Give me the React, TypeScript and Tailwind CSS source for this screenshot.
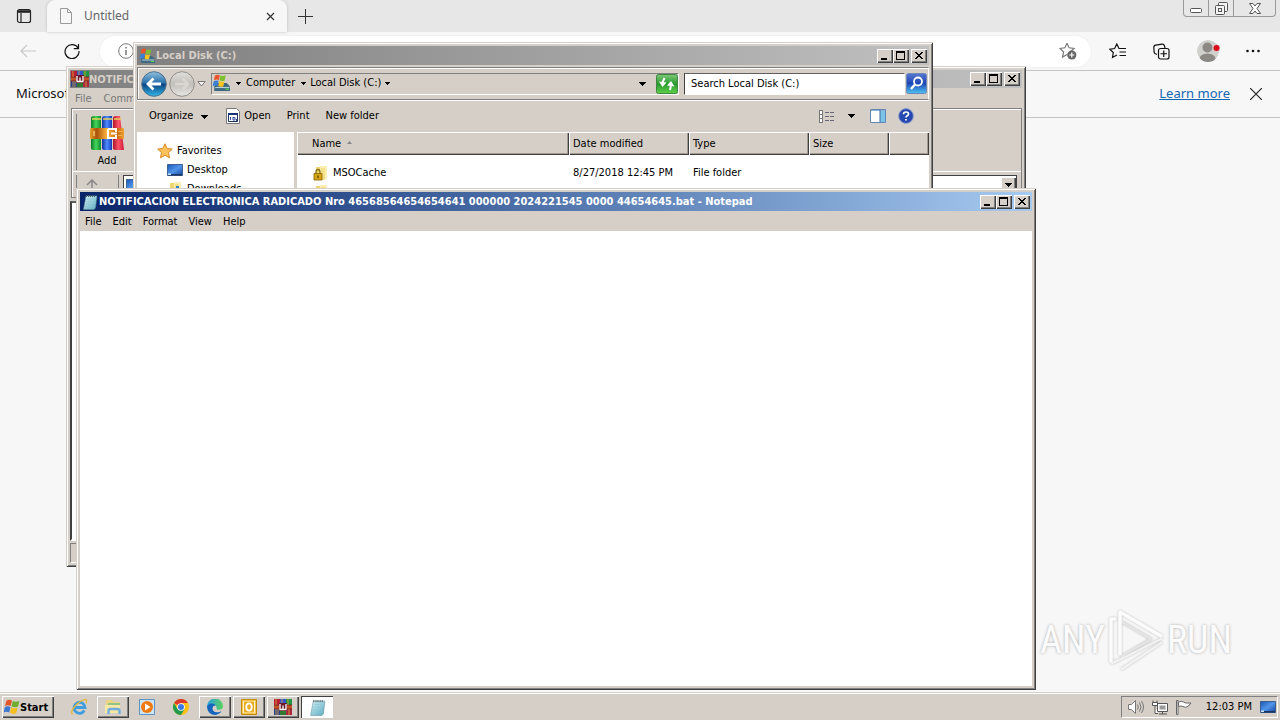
import type { ReactNode } from "react";

const RAISED =
  "bg-[#d6cfc7] shadow-[inset_1px_1px_0_#fff,inset_-1px_-1px_0_#404040,inset_-2px_-2px_0_#808080]";
const FRAME =
  "bg-[#d6cfc7] shadow-[inset_1px_1px_0_#d6cfc7,inset_-1px_-1px_0_#404040,inset_2px_2px_0_#fff,inset_-2px_-2px_0_#808080]";
const SUNKEN = "border border-t-[#808080] border-l-[#808080] border-r-white border-b-white";

function Caret({ className = "" }: { className?: string }) {
  return (
    <svg viewBox="0 0 7 4" className={`shrink-0 ${className}`} aria-hidden="true" shapeRendering="crispEdges">
      <path d="M0 0h7L3.5 4z" fill="#000" />
    </svg>
  );
}

function CaptionButtons() {
  return (
    <div className="ml-auto flex h-3.5 shrink-0">
      <button aria-label="Minimize" className={`h-3.5 w-4 ${RAISED}`}>
        <svg viewBox="0 0 16 14" className="h-3.5 w-4" shapeRendering="crispEdges">
          <path d="M4 9h6v2H4z" />
        </svg>
      </button>
      <button aria-label="Maximize" className={`h-3.5 w-4 ${RAISED}`}>
        <svg viewBox="0 0 16 14" className="h-3.5 w-4" shapeRendering="crispEdges">
          <path d="M3 2h9v9H3zM4 4v6h7V4z" fillRule="evenodd" />
        </svg>
      </button>
      <button aria-label="Close" className={`ml-0.5 h-3.5 w-4 ${RAISED}`}>
        <svg viewBox="0 0 16 14" className="h-3.5 w-4" shapeRendering="crispEdges">
          <path d="M4 3h2v1h1v1h2V4h1V3h2v1h-1v1h-1v1H9v1h1v1h1v1h1v1h-2V9H9V8H7v1H6v1H4V9h1V8h1V7h1V6H6V5H5V4H4z" />
        </svg>
      </button>
    </div>
  );
}

function DriveIcon({ className = "size-4" }: { className?: string }) {
  return (
    <svg viewBox="0 0 16 16" className={`shrink-0 ${className}`} aria-hidden="true">
      <path d="M2 11l2-3h9l3 3v4H2z" fill="#3f6a80" />
      <path d="M3 11.500h12.500v1H3z" fill="#b9d0dc" />
      <path d="M12 13h3v1h-3z" fill="#59e04a" />
      <path d="M2.500 1.500q2-1.500 4.500-.5L6 5.500Q4 4.300 1.700 5.800z" fill="#e8532a" />
      <path d="M7.600 1.200q2 1 4.700 0L11.200 6q-2.500.8-4.600-.4z" fill="#7fbf2f" />
      <path d="M1.500 6.400q2.300-1.200 4.400-.3l-1.100 4.400q-2-.9-4.300.5z" fill="#3b7fd6" />
      <path d="M6.500 6.300q2.200 1 4.500.3l-1 4.400q-2.300.8-4.500-.4z" fill="#f8c520" />
    </svg>
  );
}

function RarIcon({ className = "size-4" }: { className?: string }) {
  return (
    <svg viewBox="0 0 18 16" className={`shrink-0 ${className}`} aria-hidden="true">
      <path d="M0 0h6v7H0z" fill="#b4202f" />
      <path d="M6 0h6v7H6z" fill="#3556c8" />
      <path d="M12 0h6v7h-6z" fill="#1f9644" />
      <path d="M0 9h6v7H0z" fill="#26428f" />
      <path d="M6 9h6v7H6z" fill="#307a33" />
      <path d="M12 9h6v7h-6z" fill="#a5283b" />
      <path d="M0 6h18v4H0z" fill="#c0532a" />
      <path d="M0 6h18M0 10h18" stroke="#6d1a1f" strokeWidth=".8" />
      <path d="M5 4h8v8H5z" fill="#6b1a2c" />
      <path d="M6 5v5.500h6V5M9 6.500v4" fill="none" stroke="#fff" strokeWidth="1.300" />
      <path d="M2 0v6M4 10v6M8 0v4M14 0v6M15 10v6M2 10v6" stroke="#e6a33c" strokeWidth=".8" />
    </svg>
  );
}

function BigRarIcon() {
  return (
    <svg viewBox="0 0 36 36" className="size-9" aria-hidden="true">
      <defs>
        <linearGradient id="bookG"><stop offset="0" stopColor="#0d7a28" /><stop offset=".5" stopColor="#45d659" /><stop offset="1" stopColor="#0e8a2e" /></linearGradient>
        <linearGradient id="bookB"><stop offset="0" stopColor="#12339d" /><stop offset=".5" stopColor="#4f8cff" /><stop offset="1" stopColor="#153ab5" /></linearGradient>
        <linearGradient id="bookR"><stop offset="0" stopColor="#b0122e" /><stop offset=".5" stopColor="#ff5566" /><stop offset="1" stopColor="#cc1838" /></linearGradient>
        <linearGradient id="belt"><stop offset="0" stopColor="#e8a02a" /><stop offset=".2" stopColor="#a85208" /><stop offset=".5" stopColor="#ffb53e" /><stop offset=".8" stopColor="#c9680c" /><stop offset="1" stopColor="#f0a030" /></linearGradient>
      </defs>
      <path d="M2 3q0-2 3-2h7v34H5q-3 0-3-2z" fill="url(#bookG)" />
      <path d="M13 3q0-2 3-2h7v34h-7q-3 0-3-2z" fill="url(#bookB)" />
      <path d="M24 3q0-2 3-2h4l4 34h-8q-3 0-3-2z" fill="url(#bookR)" />
      <path d="M3 4h9M14 4h9M25 4h7" stroke="#e9d25a" strokeWidth="1.500" />
      <rect x="1" y="13" width="34" height="11" rx="1.500" fill="url(#belt)" />
      <path d="M19 14h8v3M19 14v9h8v-3M22 18.500h6" fill="none" stroke="#fff" strokeWidth="2" />
      <path d="M5 16v5M30 16v1M32 16v1M30 20v1M32 20v1" stroke="#ffd98a" strokeWidth="1.200" />
    </svg>
  );
}

function NotepadIcon({ className = "size-4" }: { className?: string }) {
  return (
    <svg viewBox="0 0 16 16" className={`shrink-0 ${className}`} aria-hidden="true">
      <defs>
        <linearGradient id="pad" x2="1" y2="1"><stop offset="0" stopColor="#d9f3f7" /><stop offset="1" stopColor="#58a9bf" /></linearGradient>
      </defs>
      <path d="M4 2h11l-1.500 12L12 15.500H1.500z" fill="url(#pad)" stroke="#5e8b9b" strokeWidth=".5" />
      <path d="M4.500 5h8M4 7.500h8.500M3.700 10h8.500M3.400 12.500h8.500" stroke="#8cc6d6" strokeWidth=".7" />
      <path d="M4.500 1v2M6.500 1v2M8.500 1v2M10.500 1v2M12.500 1v2" stroke="#4d5b60" strokeWidth=".9" />
    </svg>
  );
}

function FolderIcon({ badge }: { badge?: "lock" | "arrow" }) {
  return (
    <svg viewBox="0 0 16 16" className="size-4 shrink-0" aria-hidden="true">
      <path d="M3 2h5v13H3z" fill="#f0d573" />
      <path d="M7 1h7v13H7z" fill="#faefb4" />
      <path d="M8 3h4v12H8z" fill="#f5e08a" />
      {badge === "lock" && (
        <>
          <path d="M3 9V7q0-2.500 2-2.500T7 7v2" fill="none" stroke="#8a7013" strokeWidth="1.300" />
          <path d="M1 8.500h8V15H1z" fill="#d9a514" stroke="#7e6105" strokeWidth=".8" />
          <path d="M5 10.500v2.500" stroke="#4a3600" strokeWidth="1.200" />
        </>
      )}
      {badge === "arrow" && <path d="M9 5h3v5h2l-3.500 4L7 10h2z" fill="#2b82c9" />}
    </svg>
  );
}

function MonitorIcon({ className = "size-4" }: { className?: string }) {
  return (
    <svg viewBox="0 0 16 16" className={`shrink-0 ${className}`} aria-hidden="true">
      <defs>
        <linearGradient id="screen" x2="1" y2="1"><stop offset="0" stopColor="#1b56b8" /><stop offset=".5" stopColor="#4f95e8" /><stop offset="1" stopColor="#1746a0" /></linearGradient>
      </defs>
      <path d="M.5 2.500h15v11H.5z" fill="url(#screen)" stroke="#2a4a80" strokeWidth=".8" />
      <path d="M1 12h14v1.500H1z" fill="#1b3565" />
      <path d="M1 11.500h3v1.500H1z" fill="#c6e2f6" />
    </svg>
  );
}

/* ---------- Browser ---------- */

function Browser() {
  return (
    <section aria-label="Browser" className="flex flex-1 flex-col bg-[#f7f7f7] font-['Noto_Sans',sans-serif] text-[#111]">
      <div className="flex h-8 items-stretch bg-[#e7e7e7]">
        <button aria-label="Tab actions" className="grid w-[47px] place-items-center">
          <svg viewBox="0 0 16 16" className="size-4" fill="none" stroke="#222" strokeWidth="1.200">
            <rect x="1.500" y="1.500" width="13" height="13" rx="2" />
            <path d="M1.500 3.500h13" strokeWidth="2.600" />
            <path d="M5 5v9" />
          </svg>
        </button>
        <div className="flex w-60 items-center rounded-t-lg bg-[#f7f7f7] px-3 shadow-[0_0_3px_#bbb]">
          <svg viewBox="0 0 14 16" className="h-4 w-3.5" fill="none" stroke="#999" aria-hidden="true">
            <path d="M1.500.5h7l4 4v11h-11zM8.500.5v4h4" />
          </svg>
          <span className="ml-[11px] text-xs text-[#666]">Untitled</span>
          <button aria-label="Close tab" className="ml-auto">
            <svg viewBox="0 0 9 9" className="size-[9px]" stroke="#333" strokeWidth="1.200"><path d="M1 1l7 7M8 1L1 8" /></svg>
          </button>
        </div>
        <button aria-label="New tab" className="grid w-9 place-items-center">
          <svg viewBox="0 0 15 15" className="size-[15px]" stroke="#333" shapeRendering="crispEdges"><path d="M7.500 0v15M0 7.500h15" /></svg>
        </button>
        <div className="mr-1 ml-auto flex h-[17px] rounded-b border border-t-0 border-[#999]">
          <button aria-label="Minimize browser" className="grid w-[25px] place-items-center border-r border-[#999]">
            <svg viewBox="0 0 12 12" className="size-3" fill="#fff" stroke="#555"><rect x=".5" y="6.500" width="11" height="4" rx="1" /></svg>
          </button>
          <button aria-label="Restore browser" className="grid w-[25px] place-items-center border-r border-[#999]">
            <svg viewBox="0 0 13 13" className="size-[13px]" fill="#f4f4f4" stroke="#555">
              <rect x="3.500" y=".5" width="9" height="9" rx="1" /><rect x=".5" y="3.500" width="9" height="9" rx="1" /><rect x="3.500" y="6.500" width="3" height="3" />
            </svg>
          </button>
          <button aria-label="Close browser" className="grid w-[41px] place-items-center">
            <svg viewBox="0 0 12 11" className="h-[11px] w-3" fill="#fff" stroke="#555">
              <path d="M.5.5h3.500l2 2.500L8 .5h3.500L8 5.500l3.500 5H8L6 8l-2 2.500H.5l3.500-5z" />
            </svg>
          </button>
        </div>
      </div>

      <div className="flex h-[39px] items-center border-b border-[#c4c4c4] px-5">
        <button aria-label="Back">
          <svg viewBox="0 0 16 14" className="h-3.5 w-4" fill="none" stroke="#c8c8c8" strokeWidth="1.200"><path d="M16 7H1M7 1L1 7l6 6" /></svg>
        </button>
        <button aria-label="Refresh" className="ml-7">
          <svg viewBox="0 0 16 16" className="size-4" fill="none" stroke="#111" strokeWidth="1.200"><path d="M14.300 5.500A7 7 0 1 0 15 8M14.500 1v4.700H9.800" /></svg>
        </button>
        <div className="ml-5 flex h-[31px] flex-1 items-center rounded-full bg-white px-[18px] shadow-[0_0_2px_#e5e5e5]">
          <svg viewBox="0 0 16 16" className="size-4" fill="none" stroke="#777" aria-hidden="true"><circle cx="8" cy="8" r="7.300" /><path d="M8 7v5M8 4v1.500" strokeWidth="1.500" /></svg>
          <input aria-label="Address" className="min-w-0 flex-1 bg-transparent text-xs outline-none" />
          <button aria-label="Add to favorites" className="-mr-1">
            <svg viewBox="0 0 18 18" className="size-[18px]" fill="none" stroke="#777" strokeWidth="1.200">
              <path d="M8 1.200l2.100 4.600 5 .6-3.700 3.400M8 1.200L5.900 5.800l-5 .6L4.600 10l-1 5 4.400-2.500" />
              <circle cx="12.800" cy="13" r="4.600" fill="#666" stroke="none" />
              <path d="M12.800 10.500v5M10.300 13h5" stroke="#fff" />
            </svg>
          </button>
        </div>
        <div className="ml-[18px] flex items-center">
          <button aria-label="Favorites">
            <svg viewBox="0 0 17 16" className="h-4 w-[17px]" fill="none" stroke="#111" strokeWidth="1.200"><path d="M10.500 5.500H10L7.800 1 5.600 5.500l-4.800.7L4.300 9.500l-.8 5L8 12M10 5.500h7M10.500 9H17M10.500 12.500H17" /></svg>
          </button>
          <button aria-label="Collections" className="ml-[27px]">
            <svg viewBox="0 0 17 17" className="size-[17px]" fill="none" stroke="#111" strokeWidth="1.200">
              <path d="M3.800 11.500L2 10.500Q1.200 10 1.100 9L.8 4.500Q.7 2.500 2.700 2.200L9 1.200q2-.2 2.500 1.800L12 5" />
              <rect x="5.500" y="5.500" width="10.500" height="10.500" rx="2" fill="#f7f7f7" /><path d="M10.750 7.500v6.500M7.500 10.750H14" />
            </svg>
          </button>
          <button aria-label="Profile" className="ml-[26px]">
            <svg viewBox="0 0 24 24" className="size-6">
              <defs><clipPath id="avatar"><circle cx="12" cy="12" r="11" /></clipPath></defs>
              <g clipPath="url(#avatar)"><circle cx="12" cy="12" r="11" fill="#d0d0cd" /><circle cx="11.500" cy="8.500" r="5" fill="#8c8884" /><ellipse cx="11.500" cy="20" rx="8" ry="5.500" fill="#8c8884" /></g>
              <circle cx="20.500" cy="9" r="3.600" fill="#d80e1c" stroke="#dfece4" strokeWidth=".8" />
            </svg>
          </button>
          <button aria-label="Settings and more" className="ml-[26px]">
            <svg viewBox="0 0 14 4" className="h-1 w-3.5" fill="#111"><circle cx="1.500" cy="2" r="1.300" /><circle cx="7" cy="2" r="1.300" /><circle cx="12.500" cy="2" r="1.300" /></svg>
          </button>
        </div>
      </div>

      <div className="flex h-[47px] items-center border-b border-[#c4c4c4] pr-[18px] pl-4 text-[13px]">
        <p className="w-[50px] overflow-hidden">Microsoft</p>
        <a href="#learn" className="ml-auto text-[#1466b0] underline">Learn more</a>
        <button aria-label="Dismiss" className="ml-5">
          <svg viewBox="0 0 12 12" className="size-3" stroke="#222" strokeWidth="1.200"><path d="M0 0l12 12M12 0L0 12" /></svg>
        </button>
      </div>
    </section>
  );
}

/* ---------- Archive manager ---------- */

function ArchiveWindow() {
  return (
    <section aria-label="Archive manager" className={`absolute top-[66px] left-[66px] flex h-[501px] w-[960px] flex-col p-1 ${FRAME}`}>
      <header className="flex h-[18px] shrink-0 items-center bg-linear-to-r from-[#808080] to-[#c0c0c0] pr-0.5 pl-px">
        <RarIcon className="h-4 w-[18px]" />
        <span className="overflow-hidden pt-0.5 text-[11px] font-bold whitespace-nowrap text-[#d6cfc7]">NOTIFICACION ELECTRONICA</span>
        <CaptionButtons />
      </header>
      <nav className="flex h-5 shrink-0 items-center gap-3 pt-0.5 pl-[5px] text-[#777]">
        <button>File</button>
        <button>Commands</button>
      </nav>
      <div className="ml-px border border-[#808080] shadow-[inset_1px_1px_0_#fff]">
        <div className="flex h-[62px] items-center pt-1 pl-1">
          <i className="h-14 w-px bg-[#808080]" />
          <button className="ml-3 flex w-9 flex-col items-center">
            <BigRarIcon />
            <span className="pt-0.5 leading-4">Add</span>
          </button>
        </div>
        <div className="flex h-[26px] items-center border-t border-white px-1">
          <i className="h-5 w-px bg-[#808080]" />
          <button aria-label="Up one level" className="ml-[9px]">
            <svg viewBox="0 0 12 12" className="size-3" fill="none" stroke="#888" strokeWidth="1.500"><path d="M6 12V1.500M1 6l5-5 5 5" /></svg>
          </button>
          <i className="ml-5 h-5 w-px bg-[#808080]" />
          <div className="ml-1 flex h-5 flex-1 items-center justify-between border border-[#404040] bg-white pl-0.5">
            <MonitorIcon />
            <button aria-label="Open path list" className={`grid h-4 w-[15px] place-items-center ${RAISED}`}><Caret className="h-1 w-[7px]" /></button>
          </div>
        </div>
      </div>
      <div className="mt-[3px] flex-1 border-2 border-t-[#606060] border-r-white border-b-white border-l-[#404040] bg-white" />
      <footer className="flex h-[22px] shrink-0 items-center pt-0.5">
        <div className={`h-5 flex-1 ${SUNKEN}`} />
      </footer>
    </section>
  );
}

/* ---------- File explorer ---------- */

function NavItem({ icon, label, root }: { icon: ReactNode; label: string; root?: boolean }) {
  return (
    <li className={root ? "flex h-[19px] items-center gap-1 pl-5" : "flex h-[19px] items-center gap-1 pl-[30px]"}>
      {icon}
      <a href="#nav" className="pt-0.5">{label}</a>
    </li>
  );
}

const COLUMN =
  "h-[23px] px-1 pt-0.5 text-left font-normal shadow-[inset_1px_1px_0_#fff,inset_-1px_-1px_0_#404040,inset_-2px_-2px_0_#a09a93]";

function ExplorerWindow() {
  return (
    <section aria-label="Local Disk (C:)" className={`absolute top-[42px] left-[133px] flex h-[500px] w-[800px] flex-col p-1 ${FRAME}`}>
      <header className="flex h-[19px] shrink-0 items-center bg-linear-to-r from-[#808080] to-[#c0c0c0] px-0.5">
        <DriveIcon />
        <span className="ml-px pt-px text-[11px] font-bold text-[#d6cfc7]">Local Disk (C:)</span>
        <CaptionButtons />
      </header>

      <div className="mt-0.5 flex h-[33px] shrink-0 items-center border border-white border-t-[#808080] border-b-[#808080] border-l-[#808080] pr-px pl-[3px] shadow-[0_1px_0_#fff,inset_1px_1px_0_#fff]">
        <button aria-label="Back">
          <svg viewBox="0 0 26 26" className="size-[26px]">
            <defs><linearGradient id="orb" y2="1" x2="0"><stop offset="0" stopColor="#8fc0de" /><stop offset=".45" stopColor="#2a72ae" /><stop offset=".52" stopColor="#0d4583" /><stop offset="1" stopColor="#2fb8e8" /></linearGradient></defs>
            <circle cx="13" cy="13" r="12.300" fill="url(#orb)" stroke="#53718a" />
            <path d="M20 13H7.500M12.500 7.500L7 13l5.500 5.500" fill="none" stroke="#fff" strokeWidth="2.800" />
          </svg>
        </button>
        <button aria-label="Forward" className="ml-0.5">
          <svg viewBox="0 0 26 26" className="size-[26px]">
            <defs><linearGradient id="orbOff" y2="1" x2="0"><stop offset="0" stopColor="#e2e0dc" /><stop offset=".5" stopColor="#c2bfba" /><stop offset="1" stopColor="#e9e7e4" /></linearGradient></defs>
            <circle cx="13" cy="13" r="12.300" fill="url(#orbOff)" stroke="#8f8d8a" />
            <path d="M6 13h12.500M13.500 7.500L19 13l-5.500 5.500" fill="none" stroke="#dad7d3" strokeWidth="2.500" />
          </svg>
        </button>
        <button aria-label="Recent pages" className="ml-0.5">
          <svg viewBox="0 0 9 6" className="h-1.5 w-[9px]" fill="#f4f2ef" stroke="#777"><path d="M.8.5h7.400L4.500 5z" /></svg>
        </button>
        <div className={`ml-[5px] flex h-[22px] flex-1 items-center ${SUNKEN}`}>
          <DriveIcon className="mb-0.5 size-[18px]" />
          <Caret className="ml-1.5 h-[3px] w-[5px]" />
          <button className="ml-[5px]">Computer</button>
          <Caret className="ml-1.5 h-[3px] w-[5px]" />
          <button className="ml-1">Local Disk (C:)</button>
          <Caret className="ml-1 h-[3px] w-[5px]" />
          <Caret className="ml-auto h-1 w-[7px]" />
          <button aria-label="Refresh folder" className="ml-2.5">
            <svg viewBox="0 0 22 20" className="h-5 w-[22px]">
              <defs><linearGradient id="go" y2="1" x2="0"><stop offset="0" stopColor="#7cc877" /><stop offset=".5" stopColor="#2b9a2f" /><stop offset="1" stopColor="#5ed14a" /></linearGradient></defs>
              <rect x=".5" y=".5" width="21" height="19" rx="2" fill="url(#go)" stroke="#3d8540" />
              <path d="M8.500 4L6.500 8.500M15 11l-1 5" fill="none" stroke="#fff" strokeWidth="2" />
              <path d="M3 7.500l7.500 1L6.500 13zM11 11.500L15 7l3.500 5.500z" fill="#fff" />
            </svg>
          </button>
        </div>
        <input
          aria-label="Search Local Disk (C:)"
          defaultValue="Search Local Disk (C:)"
          className="ml-[5px] h-[22px] w-[221px] rounded-none border border-t-[#606060] border-r-white border-b-white border-l-[#404040] bg-white px-1.5 outline-none"
        />
        <button aria-label="Search" className="ml-px">
          <svg viewBox="0 0 21 21" className="size-[21px]">
            <defs><linearGradient id="find" y2="1" x2="0"><stop offset="0" stopColor="#5779cf" /><stop offset=".5" stopColor="#1d46b6" /><stop offset="1" stopColor="#4fc6f5" /></linearGradient></defs>
            <rect x=".5" y=".5" width="20" height="20" rx="2" fill="url(#find)" stroke="#6b86b8" />
            <circle cx="12" cy="8.500" r="4" fill="none" stroke="#fff" strokeWidth="1.800" />
            <path d="M9 11.500L5 16" stroke="#fff" strokeWidth="2.400" />
          </svg>
        </button>
      </div>

      <div className="flex h-8 shrink-0 items-center pr-[15px] pl-3">
        <button className="flex items-center gap-2 pt-px">Organize <Caret className="h-1 w-[7px]" /></button>
        <button className="ml-[18px] flex items-center gap-1">
          <svg viewBox="0 0 14 16" className="h-4 w-3.5" fill="none" aria-hidden="true">
            <path d="M.5.500h10l3 3v12H.5z" fill="#fff" stroke="#777" />
            <path d="M2.500 5.500h9v8h-9z" fill="#fff" stroke="#1b2f60" />
            <path d="M2 6h10" stroke="#1b2f80" strokeWidth="2" />
            <path d="M4.500 9v3M7 9v3h2V9.500H7M10.500 11v2" stroke="#334a9d" />
          </svg>
          <span className="pt-px">Open</span>
        </button>
        <button className="ml-4 pt-px">Print</button>
        <button className="ml-4 pt-px">New folder</button>
        <button aria-label="Change view" className="ml-auto">
          <svg viewBox="0 0 16 13" className="h-[13px] w-4" fill="none" stroke="#777" shapeRendering="crispEdges">
            <path d="M.5.500h3v4h-3zM.5 4.500h3v4h-3zM.5 8.500h3v4h-3z" fill="#fff" />
            <path d="M5.500 2.500h4M11 2.500h4M5.500 6.500h4M11 6.500h4M5.500 10.500h4M11 10.500h4" stroke="#667" />
          </svg>
        </button>
        <Caret className="ml-[13px] h-1 w-[7px]" />
        <button aria-label="Preview pane" className="ml-[15px]">
          <svg viewBox="0 0 16 14" className="h-3.5 w-4"><path d="M.5.500h15v13H.5z" fill="#fff" stroke="#5f86b4" /><path d="M10 2h5v11h-5z" fill="#79c3e6" /><path d="M1 1.500h14" stroke="#8eb4dc" /><path d="M10 1v12" stroke="#3f6aa0" /></svg>
        </button>
        <button aria-label="Help" className="ml-3">
          <svg viewBox="0 0 16 16" className="size-4"><circle cx="8" cy="8" r="7.400" fill="#2748b0" stroke="#8ea0cf" /><path d="M5.500 6.300Q5.500 4 8 4t2.500 2Q10.500 7.200 9 8q-1 .6-1 1.500M8 11v1.500" fill="none" stroke="#fff" strokeWidth="1.700" /></svg>
        </button>
      </div>

      <div className="flex min-h-0 flex-1">
        <ul className="w-[157px] shrink-0 bg-white pt-[9px]">
          <NavItem
            root
            label="Favorites"
            icon={<svg viewBox="0 0 16 16" className="size-4" aria-hidden="true"><path d="M8 .8l2.200 4.700 5.100.6-3.800 3.500 1 5.200L8 12.300l-4.500 2.500 1-5.200L.7 6.100l5.100-.6z" fill="#fbc15b" stroke="#d98a22" /></svg>}
          />
          <NavItem label="Desktop" icon={<MonitorIcon />} />
          <NavItem label="Downloads" icon={<FolderIcon badge="arrow" />} />
        </ul>
        <div className="ml-[3px] flex-1 bg-white">
          <table className="w-full table-fixed border-collapse">
            <thead className="bg-[#d6cfc7]">
              <tr>
                <th scope="col" className={`w-[272px] ${COLUMN}`}>
                  <span className="flex items-center gap-1.5 pl-[11px]">
                    Name
                    <svg viewBox="0 0 5 3" className="mb-1 h-[3px] w-[5px]" aria-hidden="true"><path d="M0 3h5L2.500 0z" fill="#888" /></svg>
                  </span>
                </th>
                <th scope="col" className={`w-[120px] ${COLUMN}`}>Date modified</th>
                <th scope="col" className={`w-[120px] ${COLUMN}`}>Type</th>
                <th scope="col" className={`w-20 ${COLUMN}`}>Size</th>
                <td className={COLUMN} />
              </tr>
            </thead>
            <tbody>
              <tr className="h-2"><td colSpan={5} /></tr>
              <tr className="h-5">
                <td className="pl-4"><span className="flex items-center gap-1"><FolderIcon badge="lock" />MSOCache</span></td>
                <td className="px-1 whitespace-nowrap">8/27/2018 12:45 PM</td>
                <td className="px-1">File folder</td>
                <td />
                <td />
              </tr>
              <tr className="h-[18px]">
                <td className="pl-4"><FolderIcon /></td>
                <td colSpan={4} />
              </tr>
            </tbody>
          </table>
        </div>
      </div>
    </section>
  );
}

/* ---------- Notepad ---------- */

function NotepadWindow() {
  return (
    <section aria-label="Notepad" className={`absolute top-[188px] left-[76px] flex h-[502px] w-[960px] flex-col p-1 ${FRAME}`}>
      <header className="flex h-[19px] shrink-0 items-center bg-linear-to-r from-[#0a246a] to-[#a6caf0] px-0.5">
        <NotepadIcon />
        <span className="ml-px pt-0.5 text-[11px] font-bold whitespace-nowrap text-white">
          NOTIFICACION ELECTRONICA RADICADO Nro 46568564654654641 000000 2024221545 0000 44654645.bat - Notepad
        </span>
        <CaptionButtons />
      </header>
      <nav className="flex h-5 shrink-0 items-center gap-[11px] pt-0.5 pl-[5px]">
        <button>File</button>
        <button>Edit</button>
        <button>Format</button>
        <button>View</button>
        <button>Help</button>
      </nav>
      <textarea aria-label="Document text" className="block flex-1 resize-none bg-white p-1 font-['Liberation_Mono',monospace] outline-none" />
    </section>
  );
}

/* ---------- Taskbar ---------- */

function TaskButton({ label, look, children }: { label: string; look: "flat" | "open" | "active"; children: ReactNode }) {
  const styles = {
    flat: "grid h-[22px] w-8 place-items-center",
    open: `grid h-[22px] w-8 place-items-center ${RAISED}`,
    active: "grid h-[22px] w-8 place-items-center bg-white shadow-[inset_1px_1px_0_#404040,inset_-1px_-1px_0_#fff]",
  };
  return <button aria-label={label} className={styles[look]}>{children}</button>;
}

function Taskbar() {
  return (
    <footer className="relative flex h-7 shrink-0 items-center border-t border-[#d6cfc7] bg-[#d6cfc7] px-0.5 pt-px shadow-[inset_0_1px_0_#fff]">
      <button className={`flex h-[22px] w-[52px] items-center pl-0.5 text-[11px] font-bold ${RAISED}`}>
        <svg viewBox="0 0 16 16" className="size-4" aria-hidden="true">
          <path d="M2.500 1.500q3-1.500 5.500 0L6.700 7Q4 5.500 1 7z" fill="#e2562b" />
          <path d="M8.800 2q3 1.500 6.700-.3L14 7.500q-3.500 1.500-6.500-.3z" fill="#6fae2e" />
          <path d="M.9 8q3-1.300 5.600 0L5.200 13.500Q2.500 12 -.4 13.500z" fill="#3d78cf" />
          <path d="M7.300 8.300q3 1.500 6.400.3l-1.500 5.600q-3.400 1.300-6.300-.4z" fill="#f7bf1e" />
        </svg>
        <span className="pt-0.5">Start</span>
      </button>
      <nav className="ml-[9px] flex gap-0.5">
        <TaskButton label="Internet Explorer" look="flat">
          <svg viewBox="0 0 18 18" className="size-[18px]" fill="none">
            <path d="M14.300 12.500A5.500 5.500 0 1 1 15 9.500H5" stroke="#3f9ee0" strokeWidth="2.800" />
            <path d="M2.500 16.500C-1 13 8 3.500 14.500 1.700q3.500-.5 1.500 3.500" stroke="#e2b63c" strokeWidth="1.300" />
          </svg>
        </TaskButton>
        <TaskButton label="File Explorer" look="open">
          <svg viewBox="0 0 18 16" className="h-4 w-[18px]">
            <path d="M2 1h6l1.500 2H16v11H2z" fill="#edd683" /><path d="M4 4h12v3H4z" fill="#8fc486" /><path d="M1 6h15v8H1z" fill="#f8e8a5" />
            <path d="M4.500 15v-3q0-2 2-2h7q2 0 2 2v3" fill="none" stroke="#6eaddc" strokeWidth="2.400" />
          </svg>
        </TaskButton>
        <TaskButton label="Media Player" look="flat">
          <svg viewBox="0 0 16 16" className="size-4"><path d="M.5.500h15v15H.5z" fill="#cfe5f6" stroke="#5c93c6" /><circle cx="8" cy="8" r="6" fill="#ef7a12" /><path d="M6 4.500v7L11.500 8z" fill="#fff" /></svg>
        </TaskButton>
        <TaskButton label="Chrome" look="flat">
          <svg viewBox="0 0 16 16" className="size-4">
            <circle cx="8" cy="8" r="8" fill="#fbc116" />
            <path d="M8 8L1.070 4A8 8 0 0 1 14.930 4H8z" fill="#db3a2d" />
            <path d="M1.070 4A8 8 0 0 0 8 16l3.500-6H8L4.500 10z" fill="#249a4c" />
            <circle cx="8" cy="8" r="3.800" fill="#fff" /><circle cx="8" cy="8" r="3" fill="#3c79e6" />
          </svg>
        </TaskButton>
        <TaskButton label="Edge" look="open">
          <svg viewBox="0 0 16 16" className="size-4">
            <defs>
              <linearGradient id="edgeTop" x2="1"><stop offset="0" stopColor="#2a9fe3" /><stop offset="1" stopColor="#5bd15b" /></linearGradient>
            </defs>
            <path d="M0 8A8 8 0 0 1 16 7q0 3.800-4 3.800-3 0-2.500-1.300Q10 8 8.500 6.500T0 8z" fill="url(#edgeTop)" />
            <path d="M0 8q1-3.500 4.800-3.500 3 0 4 2-3-.5-3.300 2.500-.2 4 4.500 4.300 2.500.2 4.500-1.200A8 8 0 0 1 8 16 8 8 0 0 1 0 8z" fill="#1565bd" />
          </svg>
        </TaskButton>
        <TaskButton label="Outlook" look="open">
          <svg viewBox="0 0 18 18" className="size-[18px]">
            <path d="M1.500 1.500h15v15h-15z" fill="#f7c64a" stroke="#c28a09" />
            <path d="M3 3h12v12H3z" fill="#fff3cc" />
            <path d="M4 3.500h10v11H4z" fill="#e9ab22" />
            <ellipse cx="9" cy="9" rx="2.700" ry="3.600" fill="none" stroke="#fff" strokeWidth="1.800" />
          </svg>
        </TaskButton>
        <TaskButton label="WinRAR" look="open"><RarIcon className="h-4 w-[18px]" /></TaskButton>
        <TaskButton label="Notepad" look="active"><NotepadIcon className="size-[17px]" /></TaskButton>
      </nav>
      <div className={`ml-auto flex h-[22px] items-center pr-px pl-1.5 ${SUNKEN}`}>
        <svg viewBox="0 0 16 14" className="h-3.5 w-4" fill="#fff" stroke="#777" aria-hidden="true">
          <path d="M.5 4.500h3l4-4v13l-4-4h-3z" /><path d="M9.500 4.500q1.500 2.500 0 5M11.500 2.500q3 4.500 0 9M13.500 1q4 6 0 12" fill="none" />
        </svg>
        <svg viewBox="0 0 16 15" className="ml-2 h-[15px] w-4" fill="#fff" stroke="#555" aria-hidden="true">
          <path d="M5.500 3.500h10v8h-10z" /><path d="M7.500 5.500h6v4h-6z" fill="#999" stroke="none" /><path d="M7 14h8M10.500 12v2" /><path d="M1 .5v2M5 .5v2M.5 2.500h5v3h-5zM3 6v7.500h3" />
        </svg>
        <svg viewBox="0 0 16 15" className="ml-2 h-[15px] w-4" fill="#fff" stroke="#666" aria-hidden="true">
          <path d="M.5.500h1.500v14H.5z" /><path d="M2.500 2q3-1.500 5 0 1 1.500 7.500 1l-2.500 3q-3 2.500-5.500.5-2-1-4.500 0z" />
        </svg>
        <time className="ml-3.5 pt-px">12:03 PM</time>
        <MonitorIcon className="ml-2 size-4" />
      </div>
    </footer>
  );
}

function Watermark() {
  return (
    <div className="absolute right-12 bottom-12 flex h-16 w-48 items-center justify-between font-['Liberation_Sans_Narrow','Roboto_Condensed','Roboto',sans-serif] text-[38px] leading-none text-[#fbfbfb] [text-shadow:0_0_3px_#aaa]">
      <span>ANY</span>
      <svg viewBox="0 0 56 64" className="h-16 w-14 drop-shadow-[0_0_1px_#bbb]" fill="none" stroke="#fcfcfc" strokeWidth="3.500" strokeLinecap="round" strokeLinejoin="round" aria-hidden="true">
        <path d="M14 48L43 31L14 14" stroke="#e4e4e4" strokeWidth="2.500" />
        <path d="M7 11H3v42" />
        <path d="M12 46V4l41 24" />
        <path d="M4 55l7-3L53 31M14 61l39-26" stroke="#f2f2f2" strokeWidth="2.500" />
      </svg>
      <span>RUN</span>
    </div>
  );
}

export default function App() {
  return (
    <main className="relative flex min-h-screen flex-col overflow-hidden font-['DejaVu_Sans_Condensed','DejaVu_Sans',sans-serif] text-[11px] text-black">
      <Browser />
      <Watermark />
      <ArchiveWindow />
      <ExplorerWindow />
      <NotepadWindow />
      <Taskbar />
    </main>
  );
}
